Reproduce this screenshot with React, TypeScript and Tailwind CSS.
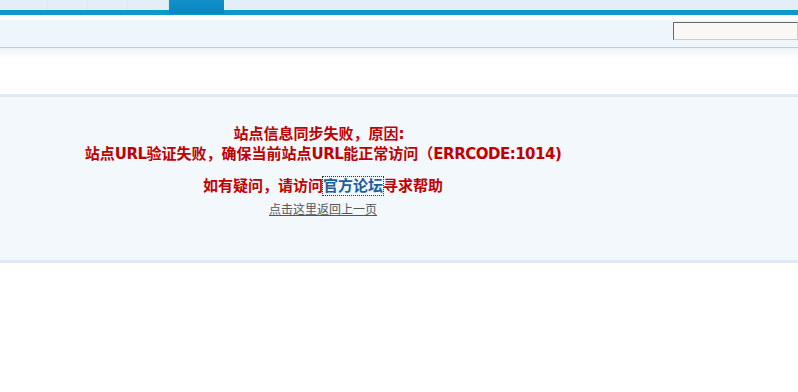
export default function App() {
  const tabs = [48, 40, 40, 41]
  return (
    <div className="min-h-[392px] w-full bg-white font-['Noto_Sans_CJK_SC',sans-serif]">
      {/* top nav tabs */}
      <div className="relative h-[10px] bg-[#e4eef8]">
        <div className="flex h-full">
          {tabs.map((w, i) => (
            <div key={i} className="h-full border-r border-[#dde8f3]" style={{ width: w }} />
          ))}
        </div>
        <div className="absolute left-[169px] top-0 h-[14px] w-[55px] bg-gradient-to-b from-[#1190cc] to-[#0a86c2]" />
      </div>
      <div className="h-[5px] bg-[#0a99c8]" />
      <div className="h-[5px] bg-white" />

      {/* header bar */}
      <div className="flex h-[27px] items-start justify-end bg-[#eff6fb]">
        <input
          type="text"
          className="mt-[2px] h-[18px] w-[125px] border border-t-[#666] border-l-[#666] border-b-[#ccc] border-r-[#ccc] bg-[#faf7f7] outline-none"
        />
      </div>
      <div className="h-[1px] bg-[#c5cace]" />
      <div className="h-[10px] bg-gradient-to-b from-[#eaf2f9] to-white" />

      <div className="h-[36px]" />

      {/* message panel */}
      <div className="border-y-[3px] border-[#dfeaf6] bg-[#f2f8fc]">
        <div className="h-[163px] w-[646px] pt-[27px] text-center font-['DejaVu_Sans','Noto_Sans_CJK_SC',sans-serif]">
          <p className="pr-[8px] text-[15px] leading-[20px] font-bold text-[#c00000]">站点信息同步失败，原因:</p>
          <p className="text-[15px] leading-[20px] font-bold text-[#c00000]">
            站点<span className="tracking-[-0.5px]">URL</span>验证失败，确保当前站点
            <span className="tracking-[-0.5px]">URL</span>能正常访问（
            <span className="tracking-[-0.5px]">ERRCODE:1014)</span>
          </p>
          <p className="mt-[12px] text-[15px] leading-[20px] font-bold text-[#c00000]">
            如有疑问，请访问
            <a className="text-[#1c5f9e] outline-1 outline-dotted outline-[#333]" href="#">
              官方论坛
            </a>
            寻求帮助
          </p>
          <p className="mt-[5px] text-[12px] leading-[16px] font-['Noto_Sans_CJK_SC',sans-serif]">
            <a className="text-[#555] underline" href="#">
              点击这里返回上一页
            </a>
          </p>
        </div>
      </div>
    </div>
  )
}
